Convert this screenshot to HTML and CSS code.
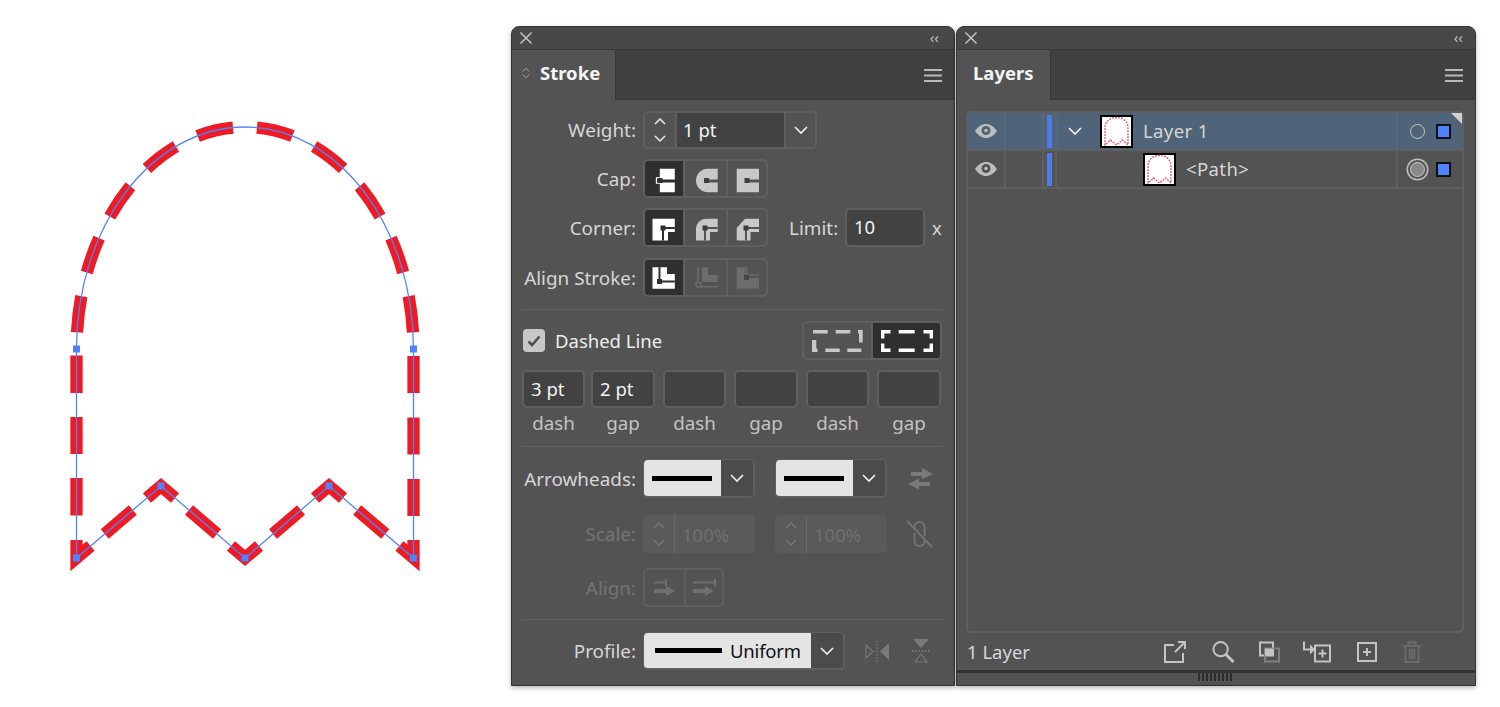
FILE: index.html
```html
<!DOCTYPE html>
<html lang="en">
<head>
<meta charset="utf-8">
<title>Stroke and Layers panels</title>
<link rel="stylesheet" href="styles.css">
</head>
<body>
<main class="app">
  <div class="canvas">
    <svg class="art" width="511" height="707" viewBox="0 0 511 707">
      <g class="dashes">
        <path class="dash-arc" d="M245 127A168.5 222 0 0 0 76.5 349"/>
        <path class="dash-arc" d="M245 127A168.5 222 0 0 1 413.5 349"/>
        <path d="M76.500 355.500V393M76.500 417V454M76.500 478V515.500M413.500 356V393M413.500 417.500V454.500M413.500 479V516"/>
        <path d="M76.500 540V558L90.600 546M104.700 534L132.800 510M146.900 498L161 486L175 498M189 510L217 534M231 546L245 558L259 546M273 534L301 510M315 498L329 486L343 498M357.200 510L385.300 534M399.400 546L413.500 558V540"/>
      </g>
      <path class="guide" d="M76.500 558V349C76.500 226 152 127 245 127C338 127 413.500 226 413.500 349V558L329 486L245 558L161 486Z"/>
      <g class="anchors">
        <rect x="73" y="345.500" width="7" height="7"/><rect x="410" y="345.500" width="7" height="7"/>
        <rect x="73" y="554.500" width="7" height="7"/><rect x="157.500" y="482.500" width="7" height="7"/>
        <rect x="241.500" y="554.500" width="7" height="7"/><rect x="325.500" y="482.500" width="7" height="7"/>
        <rect x="410" y="554.500" width="7" height="7"/>
      </g>
    </svg>
  </div>

  <section class="panel panel-stroke">
    <header class="titlebar">
      <svg class="close" viewBox="0 0 13 13"><path d="M.5.500L12.500 12.500M12.500.500L.5 12.500"/></svg>
      <span class="collapse">‹‹</span>
    </header>
    <div class="tabbar">
      <div class="tab tab-stroke">
        <svg class="updown" viewBox="0 0 8 12"><path d="M.8 4.500L4 1.200L7.200 4.500M.8 7.500L4 10.800L7.200 7.500"/></svg>
        <span>Stroke</span>
      </div>
      <svg class="menu" viewBox="0 0 18 13"><path d="M0 1H18M0 6.500H18M0 12H18"/></svg>
    </div>
    <div class="stroke-body">
      <div class="row row-weight">
        <label class="label">Weight:</label>
        <div class="combo combo-weight">
          <div class="stepper">
            <svg class="caret" viewBox="0 0 12 7"><path d="M1 6L6 1L11 6"/></svg>
            <svg class="caret" viewBox="0 0 12 7"><path d="M1 1L6 6L11 1"/></svg>
          </div>
          <div class="combo-input">1 pt</div>
          <div class="chev-box"><svg class="chev" viewBox="0 0 14 8"><path d="M1 1L7 7L13 1"/></svg></div>
        </div>
      </div>

      <div class="row row-cap">
        <label class="label">Cap:</label>
        <div class="seg">
          <div class="seg-btn seg-first on">
            <svg class="ico" viewBox="0 0 24 24"><path class="w" d="M7.800 1.800H22.800V12.500H7.800V15.500H22.800V25.200H7.800Z"/><path class="ring" d="M8 11H4.500V16H8"/><rect class="k" x="5.500" y="11" width="5" height="5"/></svg>
          </div>
          <div class="seg-btn seg-mid">
            <svg class="ico" viewBox="0 0 24 24"><path class="g" d="M23.700 1.800H13.700A11.700 11.700 0 0 0 13.700 25.200H23.700V15.500H12V12.500H23.700Z"/><rect class="k2" x="10" y="11" width="5" height="5"/></svg>
          </div>
          <div class="seg-btn seg-last">
            <svg class="ico" viewBox="0 0 24 24"><path class="g" d="M1.700 1.800H24V12.500H12V15.500H24V25.200H1.700Z"/><rect class="k2" x="9.500" y="11" width="5" height="5"/></svg>
          </div>
        </div>
      </div>

      <div class="row row-corner">
        <label class="label">Corner:</label>
        <div class="seg">
          <div class="seg-btn seg-first on">
            <svg class="ico" viewBox="0 0 24 24"><path class="w" d="M.5 2.800H22.800V16H16V24.500H.5Z"/><path class="line-k" d="M11 12H22.800M11 12V24.500"/><rect class="k" x="8.500" y="9.500" width="5" height="5"/></svg>
          </div>
          <div class="seg-btn seg-mid">
            <svg class="ico" viewBox="0 0 24 24"><path class="g" d="M23.700 2.800H12A10 10 0 0 0 2 12.800V24.500H16V16H23.700Z"/><path class="line-k2" d="M11 12H23.700M11 12V24.500"/><rect class="k2" x="8.500" y="9.500" width="5" height="5"/></svg>
          </div>
          <div class="seg-btn seg-last">
            <svg class="ico" viewBox="0 0 24 24"><path class="g" d="M24 2.800H10L1.700 12V24.500H15.500V16H24Z"/><path class="line-k2" d="M11 12H24M11 12V24.500"/><rect class="k2" x="8.500" y="9.500" width="5" height="5"/></svg>
          </div>
        </div>
        <label class="label-limit">Limit:</label>
        <div class="field field-limit">10</div>
        <span class="times">x</span>
      </div>

      <div class="row row-align">
        <label class="label">Align Stroke:</label>
        <div class="seg">
          <div class="seg-btn seg-first on">
            <svg class="ico" viewBox="0 0 24 24"><path class="w" d="M.5 1.200H15V8H22.800V22.800H.5Z"/><path class="line-k" d="M7.500 1.200V15.500H22.800"/><rect class="k" x="5" y="13" width="5" height="5"/></svg>
          </div>
          <div class="seg-btn seg-mid">
            <svg class="ico" viewBox="0 0 24 24"><path class="d" d="M8 1.200H14V9H23.700V16H8Z"/><path class="line-d" d="M4 1.200V19A1.800 1.800 0 0 0 5.800 20.800H23.700"/><circle class="ring-d" cx="4.500" cy="18.500" r="2.500"/></svg>
          </div>
          <div class="seg-btn seg-last">
            <svg class="ico" viewBox="0 0 24 24"><path class="d" d="M1.700 1.200H10V12H24V22.800H1.700Z"/><path class="line-d" d="M11.500 1.200V9H24"/><rect class="k3" x="9" y="9" width="5" height="5"/></svg>
          </div>
        </div>
      </div>

      <hr class="rule rule-a">

      <div class="row row-dashed">
        <div class="check"><svg class="check-mark" viewBox="0 0 14 12"><path d="M1.500 6.500L5 10L12.500 1.500"/></svg></div>
        <span class="dashed-text">Dashed Line</span>
        <div class="seg seg-dash">
          <div class="dash-btn dash-btn-a">
            <svg class="dash-ico" viewBox="0 0 52 22"><path class="g" d="M1 0H15.700V3.500H1ZM23.700 0H38.300V3.500H23.700ZM46 0H50.700V12.500H47V3.500H46ZM0 10H4.300V18.500H5.500V22H0ZM13.300 18.500H27.700V22H13.300ZM35.300 18.500H49.300V22H35.300Z"/></svg>
          </div>
          <div class="dash-btn dash-btn-b on">
            <svg class="dash-ico" viewBox="0 0 52 22"><path class="w" d="M0 0H9.500V3.400H3.400V8.500H0ZM42.500 0H52V8.500H48.600V3.400H42.500ZM17.700 0H33.700V3.400H17.700ZM0 13.500H3.400V18.600H9.500V22H0ZM48.600 13.500H52V22H42.500V18.600H48.600ZM17.700 18.600H33.700V22H17.700Z"/></svg>
          </div>
        </div>
      </div>

      <div class="fields">
        <div class="field field-dash">3 pt</div>
        <div class="field field-gap">2 pt</div>
        <div class="field field-dash"></div>
        <div class="field field-gap"></div>
        <div class="field field-dash"></div>
        <div class="field field-gap"></div>
      </div>
      <div class="fields captions">
        <span class="field-dash">dash</span>
        <span class="field-gap">gap</span>
        <span class="field-dash">dash</span>
        <span class="field-gap">gap</span>
        <span class="field-dash">dash</span>
        <span class="field-gap">gap</span>
      </div>

      <hr class="rule rule-b">

      <div class="row row-arrows">
        <label class="label">Arrowheads:</label>
        <div class="combo combo-arrow">
          <div class="white-pane"><span class="stroke-line"></span></div>
          <div class="chev-box"><svg class="chev" viewBox="0 0 14 8"><path d="M1 1L7 7L13 1"/></svg></div>
        </div>
        <div class="combo combo-arrow combo-next">
          <div class="white-pane"><span class="stroke-line"></span></div>
          <div class="chev-box"><svg class="chev" viewBox="0 0 14 8"><path d="M1 1L7 7L13 1"/></svg></div>
        </div>
        <svg class="swap" viewBox="0 0 26 22"><path class="mute-fill" d="M3 4H14V0L25 6L14 11V8H3ZM11 10.500L0 16L11 21.500V18H22V14H11Z"/></svg>
      </div>

      <div class="row row-scale">
        <label class="label label-dim">Scale:</label>
        <div class="combo-dim">
          <div class="stepper-dim">
            <svg class="caret" viewBox="0 0 12 7"><path d="M1 6L6 1L11 6"/></svg>
            <svg class="caret" viewBox="0 0 12 7"><path d="M1 1L6 6L11 1"/></svg>
          </div>
          <span class="dim-value">100%</span>
        </div>
        <div class="combo-dim combo-next">
          <div class="stepper-dim">
            <svg class="caret" viewBox="0 0 12 7"><path d="M1 6L6 1L11 6"/></svg>
            <svg class="caret" viewBox="0 0 12 7"><path d="M1 1L6 6L11 1"/></svg>
          </div>
          <span class="dim-value">100%</span>
        </div>
        <svg class="unlink" viewBox="0 0 27 28"><path d="M8.500 9V7A5 5 0 0 1 18.500 7V16M18.500 21A5 5 0 0 1 8.500 21V13M1 1L26 27"/></svg>
      </div>

      <div class="row row-al">
        <label class="label label-dim">Align:</label>
        <div class="seg seg-al">
          <div class="al-btn">
            <svg class="al-ico" viewBox="0 0 24 18"><path class="d2" d="M1 10H13V7L22 12L13 17V14H1ZM1 2.500H12V4.500H1ZM12 0H14V7H12Z"/></svg>
          </div>
          <div class="al-btn al-btn-b">
            <svg class="al-ico" viewBox="0 0 24 18"><path class="d2" d="M1 10H13V7L22 12L13 17V14H1ZM1 2.500H22V4.500H1ZM22 0H24V7H22Z"/></svg>
          </div>
        </div>
      </div>

      <hr class="rule rule-c">

      <div class="row row-profile">
        <label class="label">Profile:</label>
        <div class="combo combo-profile">
          <div class="white-pane white-wide"><span class="stroke-line stroke-long"></span><span class="uniform">Uniform</span></div>
          <div class="chev-box"><svg class="chev" viewBox="0 0 14 8"><path d="M1 1L7 7L13 1"/></svg></div>
        </div>
        <svg class="flip-h" viewBox="0 0 24 21"><path class="o" d="M1 4L8 10.500L1 17Z"/><path class="dot" d="M12 0V21"/><path class="mute-fill" d="M24 2V19L15 10.500Z"/></svg>
        <svg class="flip-v" viewBox="0 0 18 24"><path class="mute-fill" d="M1 0H17L9 9Z"/><path class="dot" d="M0 12H18"/><path class="o" d="M3 23L9 15L15 23Z"/></svg>
      </div>
    </div>
  </section>

  <section class="panel panel-layers">
    <header class="titlebar">
      <svg class="close" viewBox="0 0 13 13"><path d="M.5.500L12.500 12.500M12.500.500L.5 12.500"/></svg>
      <span class="collapse">‹‹</span>
    </header>
    <div class="tabbar">
      <div class="tab tab-layers"><span>Layers</span></div>
      <svg class="menu" viewBox="0 0 18 13"><path d="M0 1H18M0 6.500H18M0 12H18"/></svg>
    </div>
    <div class="layers-body">
      <div class="list">
        <div class="layer layer-selected">
          <div class="cell cell-eye"><svg class="eye" viewBox="0 0 22 14"><path class="eye-white" d="M0 7C3 2.500 7 0 11 0S19 2.500 22 7C19 11.500 15 14 11 14S3 11.500 0 7Z"/><circle class="eye-pupil" cx="11" cy="6.500" r="4.500"/><circle class="eye-white" cx="11" cy="6.500" r="1.800"/></svg></div>
          <div class="cell cell-lock"></div>
          <div class="cell cell-color"><span class="color-bar"></span></div>
          <div class="cell cell-name">
            <svg class="twist" viewBox="0 0 14 8"><path d="M1 1L7 7L13 1"/></svg>
            <svg class="thumb" viewBox="0 0 33 33"><rect class="thumb-bg" x="1" y="1" width="31" height="31"/><path class="thumb-art" d="M5 30V13C5 6.500 10 2.500 16.500 2.500S28 6.500 28 13V30L22.500 25L16.500 30L10.500 25Z"/></svg>
            <span class="layer-name">Layer 1</span>
          </div>
          <div class="cell cell-target"><span class="target"></span><span class="swatch"></span></div>
          <span class="corner-flag"></span>
        </div>
        <div class="layer">
          <div class="cell cell-eye"><svg class="eye" viewBox="0 0 22 14"><path class="eye-white" d="M0 7C3 2.500 7 0 11 0S19 2.500 22 7C19 11.500 15 14 11 14S3 11.500 0 7Z"/><circle class="eye-pupil2" cx="11" cy="6.500" r="4.500"/><circle class="eye-white" cx="11" cy="6.500" r="1.800"/></svg></div>
          <div class="cell cell-lock"></div>
          <div class="cell cell-color"><span class="color-bar"></span></div>
          <div class="cell cell-name cell-name-path">
            <svg class="thumb" viewBox="0 0 33 33"><rect class="thumb-bg" x="1" y="1" width="31" height="31"/><path class="thumb-art" d="M5 30V13C5 6.500 10 2.500 16.500 2.500S28 6.500 28 13V30L22.500 25L16.500 30L10.500 25Z"/></svg>
            <span class="layer-name">&lt;Path&gt;</span>
          </div>
          <div class="cell cell-target"><span class="target target-on"></span><span class="swatch"></span></div>
        </div>
      </div>
      <footer class="layers-foot">
        <span class="layer-count">1 Layer</span>
        <svg class="fi fi-export" viewBox="0 0 22 22"><path d="M10 4H1V21H19V12M11 11L20.500 1.500M14 1H21V8"/></svg>
        <svg class="fi fi-search" viewBox="0 0 23 23"><circle cx="8.500" cy="8.500" r="7.500"/><path class="thick" d="M14 14L22 22"/></svg>
        <svg class="fi fi-dup" viewBox="0 0 21 21"><rect x="1" y="1" width="13" height="13"/><rect class="back" x="6" y="7" width="14" height="13"/><rect class="solid" x="6" y="7" width="8" height="7"/></svg>
        <svg class="fi fi-move" viewBox="0 0 28 21"><path d="M1 0V8H8"/><path class="solid" d="M7 3L12 8L7 13Z"/><rect x="12" y="4" width="15" height="16"/><path d="M19.500 8V16M15.500 12H23.500"/></svg>
        <svg class="fi fi-new" viewBox="0 0 20 20"><rect x="1" y="1" width="18" height="18"/><path d="M10 6V14M6 10H14"/></svg>
        <svg class="fi fi-trash" viewBox="0 0 20 23"><path d="M0 5H20M6 5V1.500H14V5M3 5V22H17V5M7.500 8V19M10 8V19M12.500 8V19"/></svg>
      </footer>
    </div>
    <div class="strip"><span class="grip"></span></div>
  </section>
</main>
</body>
</html>
```

FILE: styles.css
```css
* { box-sizing: border-box; }

html, body { margin: 0; height: 100%; background: #fff; overflow: hidden; }

body { font-family: "Noto Sans", "Open Sans", sans-serif; font-size: 18.5px; color: #d6d6d6; }

svg { display: block; overflow: visible; flex: none; }

.app { display: flex; align-items: flex-start; height: 707px; }

.canvas { width: 511px; height: 707px; flex: none; }
.dashes path { fill: none; stroke: #ed1c24; stroke-width: 12.3; stroke-linejoin: miter; stroke-miterlimit: 10; }
.dashes .dash-arc { stroke-dasharray: 36.5 24.2; stroke-dashoffset: -12; }
.guide { fill: none; stroke: #5183f8; stroke-width: 1.3; }
.anchors rect { fill: #4f82ff; }

.panel {
  margin-top: 26px;
  height: 660px;
  flex: none;
  display: flex;
  flex-direction: column;
  border: 1px solid #333;
  border-radius: 8px 8px 0 0;
  background: #535353;
  box-shadow: 0 2px 5px rgba(0, 0, 0, .28);
  overflow: hidden;
}
.panel-stroke { width: 444px; }
.panel-layers { width: 520px; margin-left: 1px; }

.titlebar {
  height: 23px;
  flex: none;
  display: flex;
  align-items: center;
  justify-content: space-between;
  padding: 0 15px 0 8px;
  background: #484848;
  border-bottom: 1px solid #3a3a3a;
}
.close { width: 12px; height: 12px; }
.close path { fill: none; stroke: #c4c4c4; stroke-width: 1.6; }
.collapse { font-size: 15px; line-height: 14px; color: #bdbdbd; letter-spacing: 0; margin-top: -3px; }
.panel-layers .collapse { margin-right: -3px; }

.tabbar {
  height: 50px;
  flex: none;
  display: flex;
  align-items: stretch;
  justify-content: space-between;
  background: #404040;
  border-bottom: 1px solid #383838;
}
.tab {
  height: 50px;
  display: flex;
  align-items: center;
  background: #535353;
  color: #f4f4f4;
  font-weight: 700;
  font-size: 18.5px;
  padding-bottom: 5px;
  border-right: 1px solid #383838;
}
.tab-stroke { width: 104px; padding-left: 10px; gap: 10px; }
.tab-layers { width: 94px; padding-left: 16px; }
.updown { width: 8px; height: 12px; }
.updown path { fill: none; stroke: #a8a8a8; stroke-width: 1; }
.menu { width: 18px; height: 13px; margin: 19px 12px 0 0; }
.menu path { stroke: #b8b8b8; stroke-width: 1.8; fill: none; }

.stroke-body { flex: 1; background: #535353; }

.row { display: flex; align-items: center; }
.label { width: 124px; margin-right: 7px; text-align: right; flex: none; white-space: nowrap; font-size: 18.9px; }
.label-dim { color: #737373; }

.row-weight { height: 38px; margin-top: 11px; }
.row-cap { height: 39px; margin-top: 10px; }
.row-corner { height: 39px; margin-top: 10px; }
.row-align { height: 39px; margin-top: 11px; }
.row-dashed { height: 39px; margin-top: 11px; padding-left: 11px; }
.row-arrows { height: 39px; margin-top: 12px; }
.row-scale { height: 38px; margin-top: 17px; }
.row-al { height: 39px; margin-top: 15px; }
.row-profile { height: 38px; margin-top: 12px; }

.rule { border: 0; height: 1px; margin-left: 10px; margin-right: 11px; margin-bottom: 0; background: #5f5f5f; }
.rule-a { margin-top: 12px; }
.rule-b { margin-top: 13px; }
.rule-c { margin-top: 12px; }

.combo {
  display: flex;
  height: 100%;
  border: 2px solid #5f5f5f;
  border-radius: 5px;
  overflow: hidden;
  flex: none;
}
.combo-weight { width: 174px; }
.combo-arrow { width: 112px; border-width: 1px 2px 2px 1px; }
.combo-next { margin-left: 20px; }
.combo-profile { width: 202px; border-width: 1px 2px 2px 1px; }

.stepper, .stepper-dim {
  width: 32px;
  height: 100%;
  display: flex;
  flex-direction: column;
  align-items: center;
  justify-content: center;
  gap: 10px;
  flex: none;
}
.stepper { border-right: 2px solid #5f5f5f; }
.stepper-dim { border-right: 1px solid #696969; }
.caret { width: 12px; height: 7px; }
.caret path { fill: none; stroke: #ededed; stroke-width: 1.5; }
.stepper-dim .caret path { stroke: #757575; }

.combo-input {
  width: 107px;
  background: #424242;
  color: #f2f2f2;
  padding-left: 6px;
  line-height: 34px;
  flex: none;
}
.chev-box { flex: 1; display: flex; align-items: center; justify-content: center; background: #4b4b4b; }
.combo-weight .chev-box { border-left: 2px solid #5f5f5f; background: #535353; }
.chev { width: 14px; height: 8px; }
.chev path { fill: none; stroke: #f2f2f2; stroke-width: 1.6; }

.seg { display: flex; height: 100%; flex: none; border: 2px solid #5f5f5f; border-radius: 5px; overflow: hidden; }
.seg-btn { height: 100%; display: flex; align-items: center; justify-content: center; }
.seg-first { width: 38px; }
.seg-mid { width: 43px; border-left: 2px solid #5f5f5f; }
.seg-last { width: 40px; border-left: 2px solid #5f5f5f; }
.on { background: #2f2f2f; }
.ico { width: 24px; height: 24px; }
.w { fill: #fff; }
.g { fill: #c8c8c8; }
.d { fill: #6c6c6c; }
.k { fill: #2f2f2f; }
.k2 { fill: #3d3d3d; }
.k3 { fill: #484848; }
.ring { fill: none; stroke: #fff; stroke-width: 1.3; }
.line-k { fill: none; stroke: #2f2f2f; stroke-width: 2; }
.line-k2 { fill: none; stroke: #535353; stroke-width: 2; }
.line-d { fill: none; stroke: #6c6c6c; stroke-width: 1.6; }
.ring-d { fill: #535353; stroke: #6c6c6c; stroke-width: 1.5; }

.label-limit { margin-left: 21px; width: 57px; flex: none; font-size: 18.9px; }
.field {
  height: 100%;
  background: #424242;
  border: 2px solid #5f5f5f;
  border-radius: 5px;
  color: #f2f2f2;
  line-height: 33px;
  padding-left: 7px;
  flex: none;
}
.field-limit { width: 80px; margin-left: -1px; }
.times { margin-left: 7px; }

.check {
  width: 22px;
  height: 23px;
  background: #c8c8c8;
  border-radius: 4px;
  display: flex;
  align-items: center;
  justify-content: center;
  flex: none;
}
.check-mark { width: 14px; height: 12px; }
.check-mark path { fill: none; stroke: #4f4f4f; stroke-width: 2.6; }
.dashed-text { margin-left: 10px; color: #ededed; width: 247px; flex: none; }
.seg-dash { width: 140px; }
.dash-btn { height: 100%; display: flex; align-items: center; justify-content: center; flex: none; }
.dash-btn-a { width: 69px; border-right: 2px solid #5f5f5f; }
.dash-btn-b { width: 67px; }
.dash-ico { width: 52px; height: 22px; }

.fields { display: flex; padding-left: 10px; gap: 8px; }
.fields > .field { height: 38px; margin-top: 10px; }
.field-dash { width: 63px; flex: none; }
.field-gap { width: 64px; flex: none; }
.fields > :first-child { margin-right: -2px; }
.captions { height: 20px; margin-top: 5px; font-size: 18.8px; line-height: 20px; color: #c2c2c2; text-align: center; }

.white-pane { width: 77px; height: 100%; flex: none; background: #e4e4e4; display: flex; align-items: center; padding-left: 8px; }
.white-wide { width: 167px; padding-left: 11px; }
.stroke-line { width: 60px; height: 5px; background: #000; flex: none; }
.stroke-long { width: 67px; }
.uniform { margin-left: 8px; color: #111; letter-spacing: -.2px; }
.swap { width: 26px; height: 22px; margin-left: 21px; }
.mute-fill { fill: #7a7a7a; }

.combo-dim { width: 112px; height: 100%; background: #5a5a5a; border-radius: 5px; display: flex; align-items: center; flex: none; }
.dim-value { margin-left: 7px; color: #6f6f6f; }
.unlink { width: 27px; height: 28px; margin-left: 19px; }
.unlink path { fill: none; stroke: #747474; stroke-width: 2; }

.seg-al { width: 81px; }
.al-btn { width: 39px; height: 100%; display: flex; align-items: center; justify-content: center; flex: none; }
.al-btn-b { width: 38px; border-left: 2px solid #5f5f5f; }
.al-ico { width: 24px; height: 18px; }
.d2 { fill: #6f6f6f; }

.flip-h { width: 24px; height: 21px; margin-left: 20px; }
.flip-v { width: 18px; height: 24px; margin-left: 23px; }
.o { fill: none; stroke: #777; stroke-width: 1.2; }
.dot { fill: none; stroke: #7d7d7d; stroke-width: 1.4; stroke-dasharray: 1.6 1.6; }

.layers-body { flex: 1; min-height: 0; display: flex; flex-direction: column; padding: 11px 11px 0 9px; background: #535353; }

.list {
  height: 522px;
  flex: none;
  border: 2px solid #5f5f5f;
  border-radius: 5px;
  position: relative;
}
.layer { display: flex; height: 38px; border-bottom: 2px solid #5f5f5f; }
.layer-selected { background: #4f6478; height: 38px; }
.cell { height: 100%; flex: none; display: flex; align-items: center; }
.cell-eye { width: 38px; justify-content: center; border-right: 2px solid #5f5f5f; }
.layer-selected .cell-eye, .layer-selected .cell-lock, .layer-selected .cell-color, .layer-selected .cell-name { border-color: #56697c; }
.cell-lock { width: 38px; border-right: 2px solid #5f5f5f; }
.cell-color { width: 13px; padding-left: 3px; border-right: 2px solid #5f5f5f; }
.color-bar { width: 5px; height: 33px; background: #4f7be8; }
.cell-name { width: 341px; padding-left: 11px; border-right: 2px solid #5f5f5f; }
.cell-name-path { padding-left: 86px; }
.eye { width: 22px; height: 14px; }
.eye-white { fill: #bdbdbd; }
.eye-pupil { fill: #4f6478; }
.eye-pupil2 { fill: #535353; }
.twist { width: 14px; height: 8px; }
.twist path { fill: none; stroke: #f2f2f2; stroke-width: 1.6; }
.thumb { width: 33px; height: 33px; margin-left: 18px; }
.cell-name-path .thumb { margin-left: 0; }
.thumb-bg { fill: #fff; stroke: #000; stroke-width: 2; }
.thumb-art { fill: none; stroke: #f0505c; stroke-width: 1.4; stroke-dasharray: 1.8 1.2; }
.layer-name { margin-left: 10px; color: #d6d6d6; letter-spacing: .4px; position: relative; top: -1px; }
.cell-target { flex: 1; position: relative; padding-left: 12px; gap: 11px; }
.target { width: 15px; height: 15px; border: 1.5px solid #c8c8c8; border-radius: 50%; flex: none; }
.target-on { background: #8a8a8a; box-shadow: 0 0 0 2px #535353, 0 0 0 3.5px #c0c0c0; }
.swatch { width: 15px; height: 15px; background: #4f82ff; border: 2px solid #111; flex: none; }
.corner-flag {
  position: absolute;
  top: 0;
  right: 0;
  width: 0;
  height: 0;
  border-top: 11px solid #d0d0d0;
  border-left: 11px solid transparent;
}

.layers-foot { height: 37px; flex: none; display: flex; align-items: center; margin-left: 1px; }
.layer-count { width: 197px; flex: none; color: #d6d6d6; }
.fi { height: 22px; }
.fi path, .fi rect, .fi circle { fill: none; stroke: #c4c4c4; stroke-width: 2; }
.fi .thick { stroke-width: 3; }
.fi .solid { fill: #c4c4c4; stroke: none; }
.fi .back { stroke: #808080; }
.fi-export { width: 22px; }
.fi-search { width: 23px; margin-left: 26px; }
.fi-dup { width: 21px; margin-left: 24px; }
.fi-move { width: 28px; margin-left: 23px; }
.fi-new { width: 20px; margin-left: 26px; }
.fi-trash { width: 20px; margin-left: 25px; }
.fi-trash path { stroke: #6e6e6e; stroke-width: 1.8; }

.strip {
  height: 15px;
  flex: none;
  display: flex;
  justify-content: center;
  background: #535353;
  border-top: 3px solid #333;
}
.grip {
  width: 36px;
  height: 8px;
  background: repeating-linear-gradient(90deg, #2f2f2f 0 2px, transparent 2px 4px);
}
```
